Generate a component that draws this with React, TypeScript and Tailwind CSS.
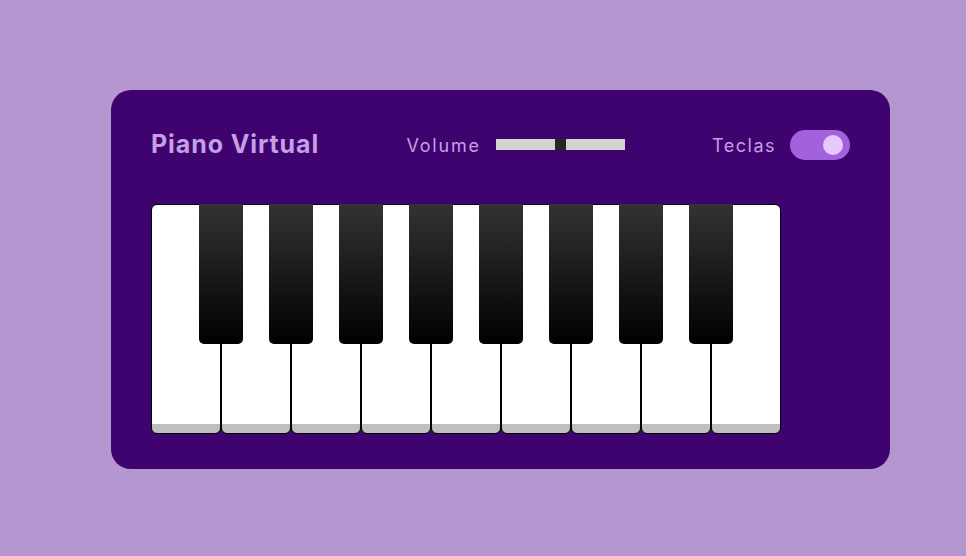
import { useState } from 'react'

const whiteKeys = ['a', 's', 'd', 'f', 'g', 'h', 'j', 'k', 'l']

export default function App() {
    const [showKeys, setShowKeys] = useState(true)

    return (
        <div className="min-h-screen w-full bg-[#b596d1] pt-[90px] pl-[111px]" style={{ fontFamily: 'Inter, "Noto Sans", sans-serif' }}>
            <div className="w-[779px] h-[379px] rounded-[20px] bg-[#3e036e] px-10 pt-[35px]">
                {/* Header */}
                <header className="flex items-center justify-between h-[40px] text-[#c59fe4]">
                    <h2 className="text-[25px] font-bold tracking-[0.9px]">Piano Virtual</h2>
                    <div className="flex items-center">
                        <span className="text-[18px] tracking-[1.8px] mr-[15px]">Volume</span>
                        <div className="relative w-[129px] h-[11px] bg-[#d3d3d3] -translate-y-px">
                            <div className="absolute left-[59px] top-0 w-[11px] h-[11px] bg-[#252525]"></div>
                        </div>
                    </div>
                    <div className="flex items-center">
                        <span className="text-[18px] tracking-[1.5px] mr-[14px]">Teclas</span>
                        <button
                            onClick={() => setShowKeys(!showKeys)}
                            className="relative w-[60px] h-[30px] rounded-full bg-[#a262dc]"
                            aria-label="Mostrar teclas"
                        >
                            <span className={`absolute top-[5px] w-[20px] h-[20px] rounded-full bg-[#e6c9ff] ${showKeys ? 'left-[33px]' : 'left-[7px]'}`}></span>
                        </button>
                    </div>
                </header>

                {/* Teclado */}
                <ul className="flex mt-[39px]">
                    {whiteKeys.map((k, i) => (
                        <li key={k} className="relative list-none">
                            <div className="w-[70px] h-[230px] rounded-[6px] border border-black bg-[linear-gradient(#fff_96%,#bfbfbf_96%)]"></div>
                            {i < whiteKeys.length - 1 && (
                                <div className="absolute z-10 top-0 right-[-22px] w-[44px] h-[140px] rounded-b-[5px] bg-[linear-gradient(#333,#000)]"></div>
                            )}
                        </li>
                    ))}
                </ul>
            </div>
        </div>
    )
}
